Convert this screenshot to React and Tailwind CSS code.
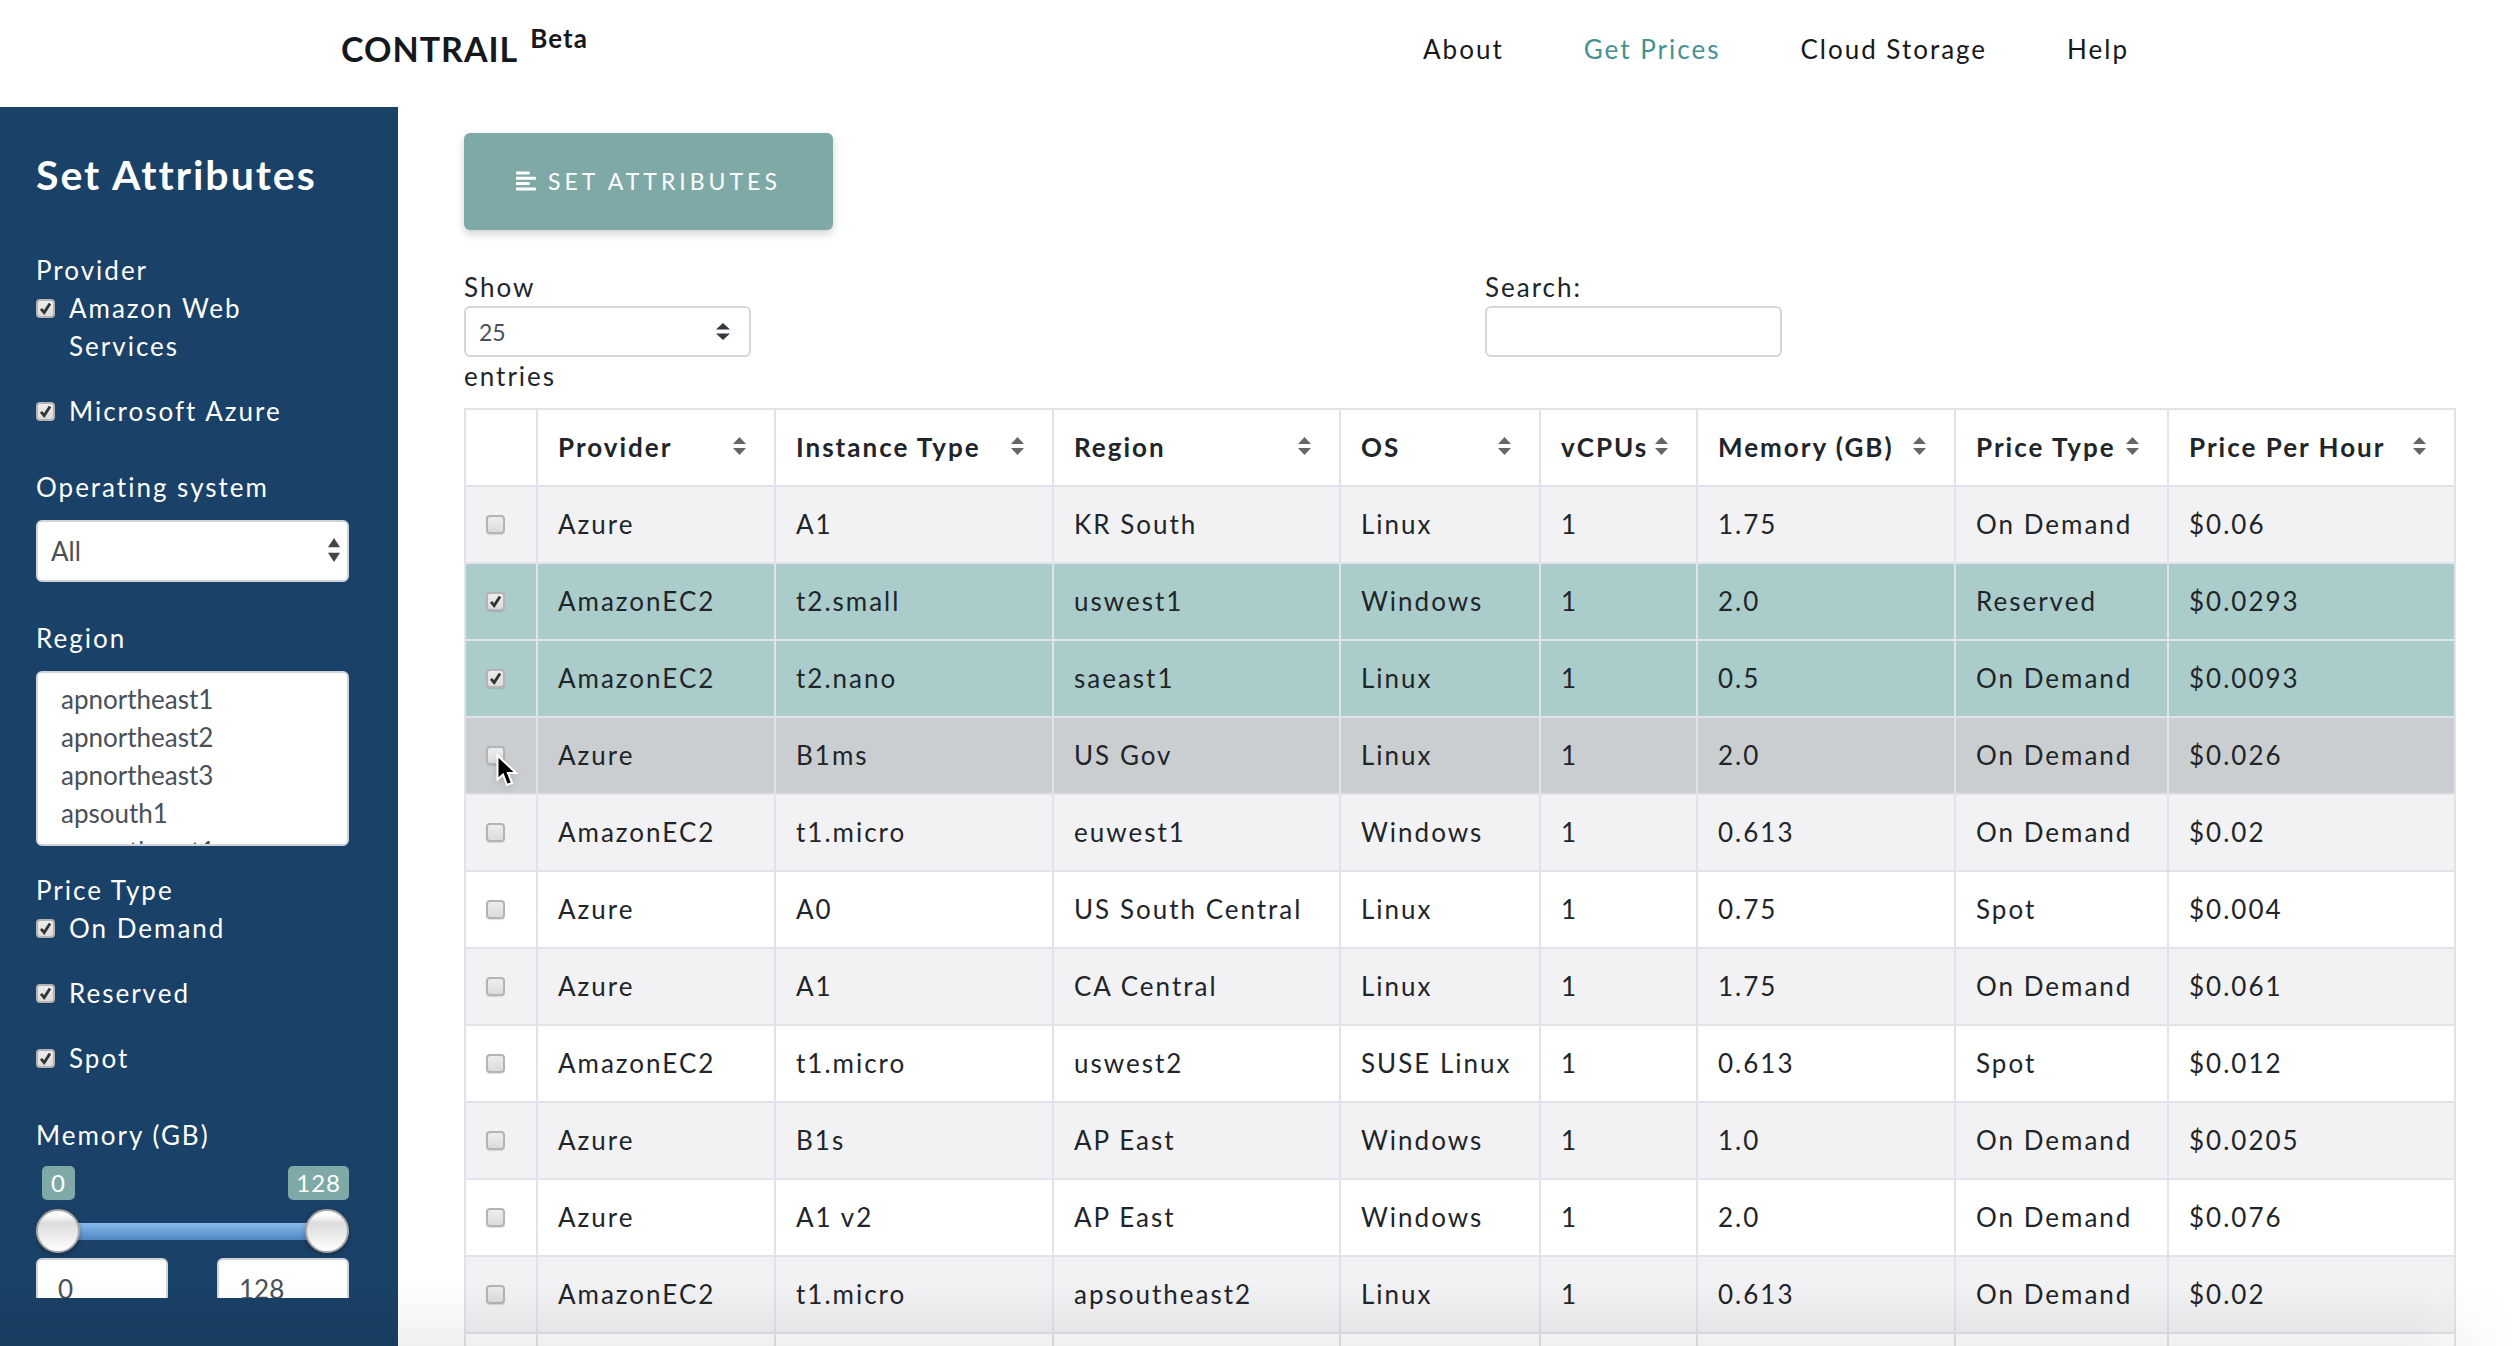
import React, { useState } from "react";

const columns = [
  { name: "Provider", width: "w-[238px]" },
  { name: "Instance Type", width: "w-[278px]" },
  { name: "Region", width: "w-[287px]" },
  { name: "OS", width: "w-[200px]" },
  { name: "vCPUs", width: "w-[157px]" },
  { name: "Memory (GB)", width: "w-[258px]" },
  { name: "Price Type", width: "w-[213px]" },
  { name: "Price Per Hour", width: "w-[287px]" },
];

const rows = [
  ["Azure", "A1", "KR South", "Linux", "1", "1.75", "On Demand", "$0.06"],
  ["AmazonEC2", "t2.small", "uswest1", "Windows", "1", "2.0", "Reserved", "$0.0293"],
  ["AmazonEC2", "t2.nano", "saeast1", "Linux", "1", "0.5", "On Demand", "$0.0093"],
  ["Azure", "B1ms", "US Gov", "Linux", "1", "2.0", "On Demand", "$0.026"],
  ["AmazonEC2", "t1.micro", "euwest1", "Windows", "1", "0.613", "On Demand", "$0.02"],
  ["Azure", "A0", "US South Central", "Linux", "1", "0.75", "Spot", "$0.004"],
  ["Azure", "A1", "CA Central", "Linux", "1", "1.75", "On Demand", "$0.061"],
  ["AmazonEC2", "t1.micro", "uswest2", "SUSE Linux", "1", "0.613", "Spot", "$0.012"],
  ["Azure", "B1s", "AP East", "Windows", "1", "1.0", "On Demand", "$0.0205"],
  ["Azure", "A1 v2", "AP East", "Windows", "1", "2.0", "On Demand", "$0.076"],
  ["AmazonEC2", "t1.micro", "apsoutheast2", "Linux", "1", "0.613", "On Demand", "$0.02"],
];

const HOVERED_ROW = 3;

function Checkbox({ id, checked, onChange, label }) {
  return (
    <span className="relative block size-[19px] shrink-0">
      <input
        id={id}
        type="checkbox"
        aria-label={label}
        checked={checked}
        onChange={onChange}
        className="block size-[19px] appearance-none rounded-[4px] border-2 border-[#b4b4b4] bg-linear-to-b from-[#ededed] to-[#dcdcdc] shadow-[0_1px_1px_rgba(0,0,0,0.12)]"
      />
      {checked && (
        <svg viewBox="0 0 19 19" className="pointer-events-none absolute inset-0 size-full" aria-hidden="true">
          <path d="M5 9.8 L8.2 13.6 L14 4.6" fill="none" stroke="#333" strokeWidth="2.8" />
        </svg>
      )}
    </span>
  );
}

function CheckField({ id, label }) {
  const [checked, setChecked] = useState(true);
  return (
    <div className="flex gap-[14px]">
      <span className="flex h-[38px] items-center">
        <Checkbox id={id} checked={checked} onChange={() => setChecked(!checked)} />
      </span>
      <label htmlFor={id}>{label}</label>
    </div>
  );
}

function SortArrows({ className }) {
  return (
    <svg viewBox="0 0 12 18" preserveAspectRatio="none" className={className} aria-hidden="true">
      <path d="M6 0 L12 7 H0 Z M0 11 H12 L6 18 Z" fill="currentColor" />
    </svg>
  );
}

const thumb =
  "pointer-events-none absolute inset-0 m-0 h-[44px] w-full appearance-none bg-transparent [&::-webkit-slider-thumb]:pointer-events-auto [&::-webkit-slider-thumb]:size-[44px] [&::-webkit-slider-thumb]:appearance-none [&::-webkit-slider-thumb]:rounded-full [&::-webkit-slider-thumb]:border-2 [&::-webkit-slider-thumb]:border-[#a9a6a6] [&::-webkit-slider-thumb]:bg-linear-to-b [&::-webkit-slider-thumb]:from-white [&::-webkit-slider-thumb]:from-10% [&::-webkit-slider-thumb]:via-[#dcdcdc] [&::-webkit-slider-thumb]:via-30% [&::-webkit-slider-thumb]:to-white [&::-webkit-slider-thumb]:shadow-[0_2px_5px_rgba(0,0,0,0.3)]";

function MemoryRange() {
  const [low, setLow] = useState(0);
  const [high, setHigh] = useState(128);
  return (
    <fieldset>
      <legend className="mb-[12px]">Memory (GB)</legend>
      <div className="flex justify-between pl-[6px] text-[24px] leading-[34px] tracking-[1px]">
        <output className="rounded-[5px] bg-[#7fa9a7] px-[9px]">{low}</output>
        <output className="rounded-[5px] bg-[#7fa9a7] px-[8px]">{high}</output>
      </div>
      <div className="relative mt-[9px] flex h-[44px] items-center">
        <div className="h-[17px] w-full rounded-full bg-linear-to-b from-[#8abdea] to-[#5085c4]" />
        <input type="range" aria-label="Minimum memory" min="0" max="128" value={low} onChange={(e) => setLow(+e.target.value)} className={thumb} />
        <input type="range" aria-label="Maximum memory" min="0" max="128" value={high} onChange={(e) => setHigh(+e.target.value)} className={thumb} />
      </div>
      <div className="mt-[5px] flex justify-between">
        <input aria-label="Minimum" value={low} onChange={(e) => setLow(+e.target.value || 0)} className="h-[62px] w-[132px] rounded-[6px] border-2 border-[#ced4da] bg-white px-[20px] text-[26px] tracking-normal text-[#495057]" />
        <input aria-label="Maximum" value={high} onChange={(e) => setHigh(+e.target.value || 0)} className="h-[62px] w-[132px] rounded-[6px] border-2 border-[#ced4da] bg-white px-[20px] text-[26px] tracking-normal text-[#495057]" />
      </div>
    </fieldset>
  );
}

function Sidebar() {
  return (
    <aside className="flex w-[398px] shrink-0 flex-col bg-[#1a4167] px-[36px] pb-[48px] text-white">
      <div className="min-h-0 flex-1 overflow-hidden pr-[13px]">
        <h2 className="mt-[44px] text-[41px] leading-[48px] font-bold tracking-[2px]">Set Attributes</h2>
        <fieldset className="mt-[52px] flex flex-col">
          <legend>Provider</legend>
          <CheckField id="aws" label={<>Amazon Web<br />Services</>} />
          <div className="mt-[27px]">
            <CheckField id="azure" label="Microsoft Azure" />
          </div>
        </fieldset>
        <label htmlFor="os" className="mt-[38px] block">Operating system</label>
        <div className="relative mt-[14px]">
          <select id="os" defaultValue="All" className="block h-[62px] w-full appearance-none rounded-[6px] border-2 border-[#ced4da] bg-white px-[13px] text-[26px] tracking-normal text-[#495057]">
            <option>All</option>
            <option>Linux</option>
            <option>Windows</option>
          </select>
          <SortArrows className="pointer-events-none absolute top-[18px] right-[9px] h-[24px] w-[12px] text-[#444]" />
        </div>
        <label htmlFor="region" className="mt-[37px] block">Region</label>
        <select id="region" multiple className="mt-[14px] block h-[175px] w-full appearance-none overflow-hidden rounded-[6px] border-2 border-[#ced4da] bg-white px-[20px] py-[10px] text-[26px] tracking-normal text-[#495057] [scrollbar-width:none]">
          <option className="h-[38px] px-[3px] leading-[38px]">apnortheast1</option>
          <option className="h-[38px] px-[3px] leading-[38px]">apnortheast2</option>
          <option className="h-[38px] px-[3px] leading-[38px]">apnortheast3</option>
          <option className="h-[38px] px-[3px] leading-[38px]">apsouth1</option>
          <option className="h-[38px] px-[3px] leading-[38px]">apsoutheast1</option>
        </select>
        <fieldset className="mt-[25px] flex flex-col">
          <legend>Price Type</legend>
          <CheckField id="ondemand" label="On Demand" />
          <div className="mt-[27px]">
            <CheckField id="reserved" label="Reserved" />
          </div>
          <div className="mt-[27px]">
            <CheckField id="spot" label="Spot" />
          </div>
        </fieldset>
        <div className="mt-[39px]">
          <MemoryRange />
        </div>
      </div>
    </aside>
  );
}

function PriceTable() {
  const [picked, setPicked] = useState([1, 2]);
  const toggle = (i) => setPicked(picked.includes(i) ? picked.filter((n) => n !== i) : [...picked, i]);
  return (
    <table className="mt-[13px] w-full table-fixed border-collapse text-[#212529]">
      <thead>
        <tr>
          <th className="w-[72px] border-2 border-[#e1e3e8]" aria-label="Selected" />
          {columns.map((c) => (
            <th key={c.name} className={`relative border-2 border-[#e1e3e8] py-[19px] pl-[20px] text-left leading-[37px] font-bold whitespace-nowrap ${c.width}`}>
              <button type="button" className="block w-full text-left tracking-[2px]">{c.name}</button>
              <SortArrows className="pointer-events-none absolute top-[27px] right-[28px] h-[18px] w-[13px] text-[#666]" />
            </th>
          ))}
        </tr>
      </thead>
      <tbody>
        {rows.map((row, i) => {
          const tone = picked.includes(i)
            ? "bg-[#aacccb]"
            : i === HOVERED_ROW
              ? "bg-[#caced1]"
              : i % 2 === 0
                ? "bg-[#f2f2f4]"
                : "bg-white";
          return (
            <tr key={i} className={tone}>
              <td className="border-2 border-[#e1e3e8] pl-[20px] align-middle">
                <div className="relative size-[19px]">
                  <Checkbox label={`Select row ${i + 1}`} checked={picked.includes(i)} onChange={() => toggle(i)} />
                  {i === HOVERED_ROW && (
                    <svg viewBox="0 0 22 34" className="pointer-events-none absolute top-[8px] left-[10px] z-10 h-[34px] w-[22px] drop-shadow-md" aria-hidden="true">
                      <path d="M1.5 1.5 V25.5 L7 20.5 L11 31 L16 29 L12 19 H20 Z" fill="#000" stroke="#fff" strokeWidth="2" />
                    </svg>
                  )}
                </div>
              </td>
              {row.map((cell, j) => (
                <td key={j} className="border-2 border-[#e1e3e8] py-[19px] pl-[20px] leading-[37px] whitespace-nowrap">
                  {cell}
                </td>
              ))}
            </tr>
          );
        })}
        <tr className="bg-white">
          <td className="h-[77px] border-2 border-[#e1e3e8]" />
          {columns.map((c) => (
            <td key={c.name} className="border-2 border-[#e1e3e8]" />
          ))}
        </tr>
      </tbody>
    </table>
  );
}

export default function App() {
  return (
    <div className="relative flex h-screen flex-col overflow-hidden bg-white font-[Lato,'Open_Sans',sans-serif] text-[26px] leading-[38px] tracking-[2px] text-[#212529]">
      <header className="h-[107px] shrink-0">
        <div className="mx-auto flex h-[98px] max-w-[1830px] items-center justify-between pr-[42px] text-[#16181b]">
          <a href="#home" className="flex items-center gap-[12px] text-[34px] font-bold tracking-[1px]">
            CONTRAIL
            <sup className="top-0 -mt-[22px] text-[26px] leading-[38px]">Beta</sup>
          </a>
          <nav className="flex gap-[80px]">
            <a href="#about">About</a>
            <a href="#prices" className="text-[#45938f]">Get Prices</a>
            <a href="#storage">Cloud Storage</a>
            <a href="#help">Help</a>
          </nav>
        </div>
      </header>
      <div className="flex min-h-0 flex-1">
        <Sidebar />
        <main className="min-w-0 flex-1 overflow-hidden pt-[26px] pr-[56px] pl-[66px]">
          <button type="button" className="flex h-[97px] items-center gap-[12px] rounded-[6px] bg-[#7fa9a7] px-[52px] pb-[2px] text-[23px] tracking-[4px] text-white uppercase shadow-[0_4px_8px_rgba(0,0,0,0.18)]">
            <svg viewBox="0 0 20 20" className="size-[20px]" aria-hidden="true">
              <path d="M1 2 H12.5 M1 7.3 H19 M1 12.6 H12.5 M1 18 H19" stroke="currentColor" strokeWidth="3" strokeLinecap="round" />
            </svg>
            Set Attributes
          </button>
          <div className="mt-[38px] grid grid-cols-2 gap-[50px]">
            <div>
              <label htmlFor="length" className="block">Show</label>
              <div className="relative w-[287px]">
                <select id="length" defaultValue="25" className="block h-[51px] w-full appearance-none rounded-[6px] border-2 border-[#d3d6dc] bg-white px-[13px] text-[23px] tracking-normal text-[#495057]">
                  <option>10</option>
                  <option>25</option>
                  <option>50</option>
                </select>
                <SortArrows className="pointer-events-none absolute top-[17px] right-[21px] h-[17px] w-[14px] text-[#343a40]" />
              </div>
              <span className="block">entries</span>
            </div>
            <div>
              <label htmlFor="search" className="block">Search:</label>
              <input id="search" type="search" className="block h-[51px] w-[297px] rounded-[6px] border-2 border-[#d3d6dc] bg-white px-[14px] text-[23px]" />
            </div>
          </div>
          <PriceTable />
        </main>
      </div>
      <div className="pointer-events-none absolute inset-x-0 bottom-0 h-[64px] bg-linear-to-b from-transparent to-black/6 [mask-image:linear-gradient(to_right,black_96%,transparent_100%)]" />
    </div>
  );
}
